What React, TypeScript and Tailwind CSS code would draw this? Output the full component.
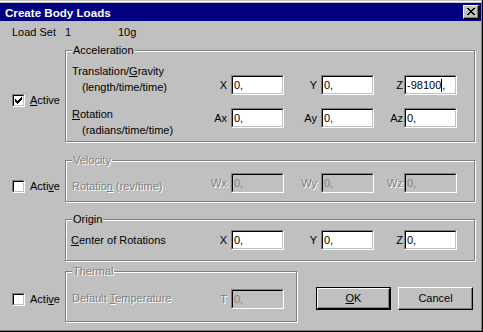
import React from "react";

const dim = "text-[#808080] [text-shadow:1px_1px_0_#fff]";

// pixel glyphs, [x, y, w] per run
const CHECK: [number, number, number][] = [
  [6, 0, 1], [5, 1, 2], [0, 2, 1], [4, 2, 3], [0, 3, 2], [3, 3, 3], [0, 4, 5], [1, 5, 3], [2, 6, 1],
];
const CROSS: [number, number, number][] = [
  [0, 0, 2], [6, 0, 2], [1, 1, 2], [5, 1, 2], [2, 2, 4], [3, 3, 2], [2, 4, 4], [1, 5, 2], [5, 5, 2], [0, 6, 2], [6, 6, 2],
];

function Glyph({ runs, w, h }: { runs: [number, number, number][]; w: number; h: number }) {
  return (
    <svg width={w} height={h} viewBox={`0 0 ${w} ${h}`} shapeRendering="crispEdges">
      {runs.map(([x, y, rw], i) => (
        <rect key={i} x={x} y={y} width={rw} height={1} fill="#000" />
      ))}
    </svg>
  );
}

function CloseButton() {
  return (
    <div className="w-[16px] h-[14px] bg-[#c0c0c0] border border-t-white border-l-white border-r-black border-b-black shadow-[inset_-1px_-1px_0_#808080] flex items-center justify-center pr-[1px] pb-[1px]">
      <Glyph runs={CROSS} w={8} h={7} />
    </div>
  );
}

function Checkbox({ checked, children }: { checked?: boolean; children: React.ReactNode }) {
  return (
    <div className="flex items-center">
      <div className="w-[13px] h-[13px] border border-t-[#808080] border-l-[#808080] border-r-white border-b-white">
        <div className="w-full h-full bg-white border border-t-black border-l-black border-r-[#c0c0c0] border-b-[#c0c0c0] flex items-center justify-center">
          {checked && <Glyph runs={CHECK} w={7} h={7} />}
        </div>
      </div>
      <span className="ml-[5px]">{children}</span>
    </div>
  );
}

function Edit({ value, disabled, caret }: { value: string; disabled?: boolean; caret?: boolean }) {
  return (
    <div className="w-[53px] h-[20px] border border-t-[#808080] border-l-[#808080] border-r-white border-b-white">
      <div
        className={`h-full flex items-center pl-[1px] border border-t-black border-l-black border-r-[#c0c0c0] border-b-[#c0c0c0] ${
          disabled ? "bg-[#c0c0c0] text-[#808080]" : "bg-white text-black"
        }`}
      >
        {caret ? (
          <>
            {value}
            <span className="w-[1px] h-[13px] bg-black" />,
          </>
        ) : (
          value
        )}
      </div>
    </div>
  );
}

function Field({
  label,
  labelClass,
  value = "0,",
  disabled,
  caret,
}: {
  label: string;
  labelClass: string;
  value?: string;
  disabled?: boolean;
  caret?: boolean;
}) {
  return (
    <div className="flex items-center">
      <span className={`text-right ${labelClass} ${disabled ? dim : ""}`}>{label}</span>
      <Edit value={value} disabled={disabled} caret={caret} />
    </div>
  );
}

function Group({
  title,
  disabled,
  className,
  children,
}: {
  title: string;
  disabled?: boolean;
  className: string;
  children: React.ReactNode;
}) {
  return (
    <div className={`relative border border-[#808080] shadow-[1px_1px_0_#fff,inset_1px_1px_0_#fff] ${className}`}>
      <span className={`absolute top-[-7px] left-[6px] px-[1px] bg-[#c0c0c0] leading-[13px] ${disabled ? dim : ""}`}>
        {title}
      </span>
      {children}
    </div>
  );
}

function XYZ({ labels, disabled, zCaret }: { labels: string[]; disabled?: boolean; zCaret?: boolean }) {
  return (
    <div className="flex">
      <Field label={labels[0]} labelClass="w-[30px] pr-[4px]" disabled={disabled} />
      <Field label={labels[1]} labelClass="w-[37px] pr-[4px]" disabled={disabled} />
      <Field
        label={labels[2]}
        labelClass="w-[30px] pr-[1px]"
        disabled={disabled}
        value={zCaret ? "-98100" : "0,"}
        caret={zCaret}
      />
    </div>
  );
}

export default function App() {
  return (
    <div className="w-[483px] h-[332px] bg-[#c0c0c0] border-r border-b border-black pt-[1px] font-['Liberation_Sans',Arial,sans-serif] text-[11px] leading-[13px] text-black">
      <div className="h-full border-t border-r border-b border-t-white border-r-[#808080] border-b-[#808080] pt-[1px]">
        {/* Title bar */}
        <div className="h-[18px] bg-[#000080] flex items-center justify-between pl-[5px] pr-[2px]">
          <span className="text-white font-bold text-[11.6px]">Create Body Loads</span>
          <CloseButton />
        </div>

        {/* Load set */}
        <div className="flex h-[14px] mt-[4px] items-center">
          <span className="w-[65px] pl-[12px]">Load Set</span>
          <span className="w-[53px]">1</span>
          <span>10g</span>
        </div>

        {/* Acceleration */}
        <div className="flex mt-[11px]">
          <div className="w-[65px] pl-[12px] pt-[44px]">
            <Checkbox checked>
              <u>A</u>ctive
            </Checkbox>
          </div>
          <Group title="Acceleration" className="w-[410px] h-[92px] flex">
            <div className="w-[135px] pl-[6px] pt-[12px] leading-[16px]">
              <div>
                Translation/<u>G</u>ravity
              </div>
              <div className="pl-[10px]">(length/time/time)</div>
              <div className="mt-[11px]">
                <u>R</u>otation
              </div>
              <div className="pl-[10px]">(radians/time/time)</div>
            </div>
            <div className="pt-[24px]">
              <XYZ labels={["X", "Y", "Z"]} zCaret />
              <div className="mt-[13px]">
                <XYZ labels={["Ax", "Ay", "Az"]} />
              </div>
            </div>
          </Group>
        </div>

        {/* Velocity */}
        <div className="flex mt-[18px]">
          <div className="w-[65px] pl-[12px] pt-[20px]">
            <Checkbox>
              Acti<u>v</u>e
            </Checkbox>
          </div>
          <Group title="Velocity" disabled className="w-[410px] h-[42px] flex">
            <div className={`w-[135px] pl-[6px] pt-[17px] leading-[16px] ${dim}`}>
              Rotatio<u>n</u> (rev/time)
            </div>
            <div className="pt-[12px]">
              <XYZ labels={["Wx", "Wy", "Wz"]} disabled />
            </div>
          </Group>
        </div>

        {/* Origin */}
        <div className="flex mt-[17px]">
          <div className="w-[65px]" />
          <Group title="Origin" className="w-[410px] h-[42px] flex">
            <div className="w-[135px] pl-[5px] pt-[12px] leading-[16px]">
              <u>C</u>enter of Rotations
            </div>
            <div className="pt-[10px]">
              <XYZ labels={["X", "Y", "Z"]} />
            </div>
          </Group>
        </div>

        {/* Thermal + buttons */}
        <div className="flex mt-[10px]">
          <div className="w-[65px] pl-[12px] pt-[22px]">
            <Checkbox>
              Acti<u>v</u>e
            </Checkbox>
          </div>
          <Group title="Thermal" disabled className="w-[232px] h-[51px] flex">
            <div className={`w-[135px] pl-[6px] pt-[18px] leading-[16px] ${dim}`}>
              Default <u>T</u>emperature
            </div>
            <div className="pt-[17px]">
              <Field label="T" labelClass="w-[30px] pr-[4px]" disabled />
            </div>
          </Group>
          <div className="flex gap-[7px] ml-[19px] pt-[16px] h-fit">
            <div className="w-[75px] h-[23px] border border-black">
              <div className="h-full border border-t-white border-l-white border-r-black border-b-black shadow-[inset_-1px_-1px_0_#808080] flex items-center justify-center">
                <span>
                  <u>O</u>K
                </span>
              </div>
            </div>
            <div className="w-[75px] h-[23px] border border-t-white border-l-white border-r-black border-b-black shadow-[inset_-1px_-1px_0_#808080] flex items-center justify-center">
              Cancel
            </div>
          </div>
        </div>
      </div>
    </div>
  );
}
